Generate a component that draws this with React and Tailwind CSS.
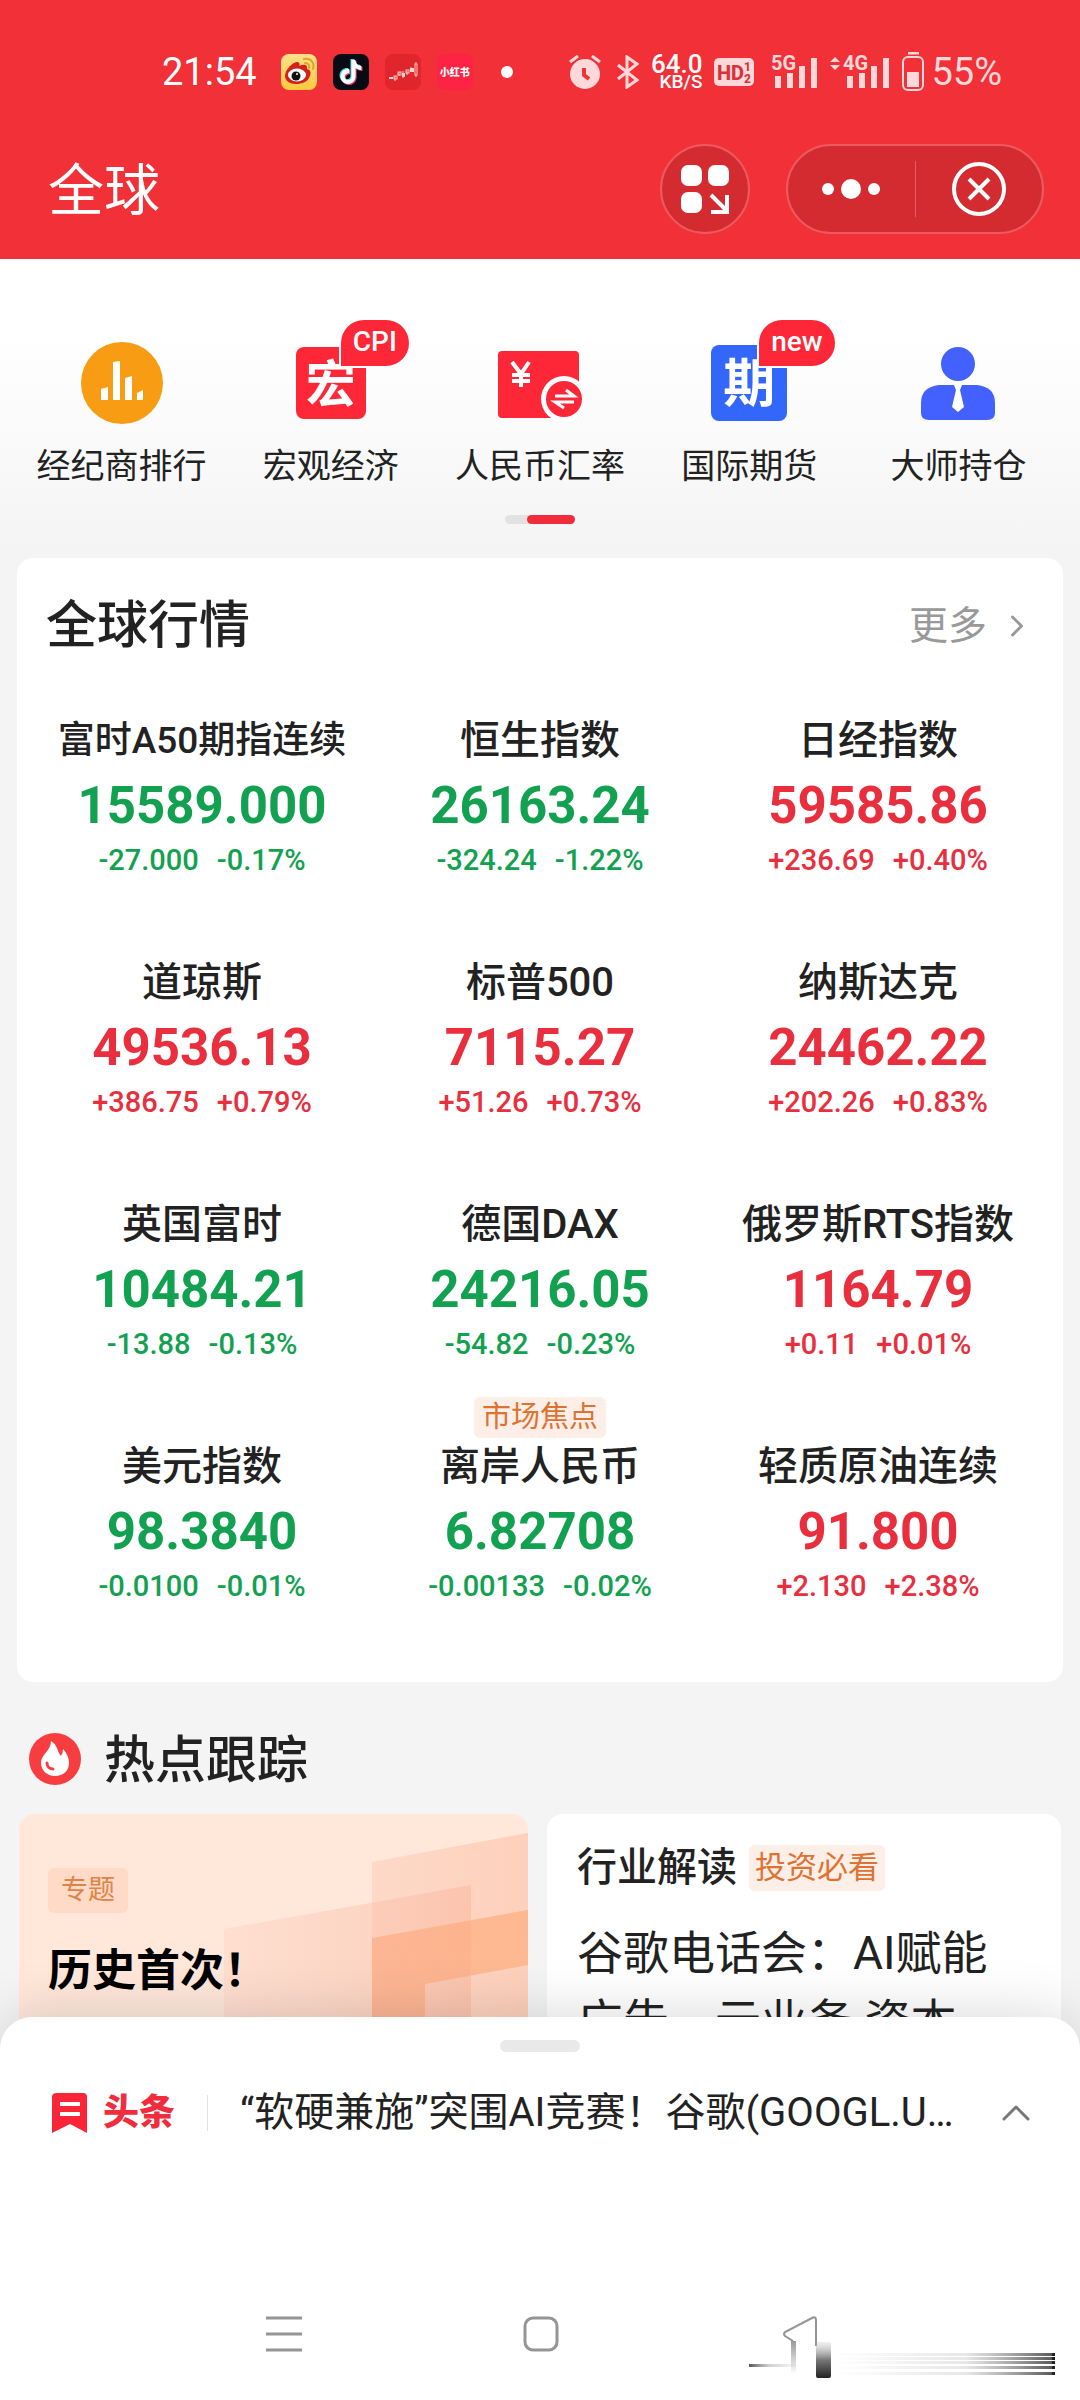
import React from 'react';
import { ChevronRight, ChevronUp } from 'lucide-react';
import { SiTiktok } from 'react-icons/si';

const indices = [
  { name: '富时A50期指连续', value: '15589.000', change: '-27.000', percent: '-0.17%', small: true },
  { name: '恒生指数', value: '26163.24', change: '-324.24', percent: '-1.22%' },
  { name: '日经指数', value: '59585.86', change: '+236.69', percent: '+0.40%' },
  { name: '道琼斯', value: '49536.13', change: '+386.75', percent: '+0.79%' },
  { name: '标普500', value: '7115.27', change: '+51.26', percent: '+0.73%' },
  { name: '纳斯达克', value: '24462.22', change: '+202.26', percent: '+0.83%' },
  { name: '英国富时', value: '10484.21', change: '-13.88', percent: '-0.13%' },
  { name: '德国DAX', value: '24216.05', change: '-54.82', percent: '-0.23%' },
  { name: '俄罗斯RTS指数', value: '1164.79', change: '+0.11', percent: '+0.01%' },
  { name: '美元指数', value: '98.3840', change: '-0.0100', percent: '-0.01%' },
  { name: '离岸人民币', value: '6.82708', change: '-0.00133', percent: '-0.02%', tag: '市场焦点' },
  { name: '轻质原油连续', value: '91.800', change: '+2.130', percent: '+2.38%' },
];

const WeiboIcon = () => (
  <svg viewBox="0 0 36 36" className="w-9 h-9">
    <defs>
      <linearGradient id="weibo" x1="0" y1="0" x2="0" y2="1">
        <stop offset="0" stopColor="#fbe08a" />
        <stop offset="1" stopColor="#fbc93f" />
      </linearGradient>
    </defs>
    <rect width="36" height="36" rx="8" fill="url(#weibo)" />
    <path d="M4 22C4 15 13 7 17 8C19 9 19 11 18 12C22 10 27 10 26 15C30 16 30 19 29 22C27 28 21 30 15 30C9 30 4 27 4 22Z" fill="#d0231c" />
    <ellipse cx="16" cy="21" rx="9" ry="6.5" fill="#fff" />
    <circle cx="15" cy="22" r="4.5" fill="#111" />
    <circle cx="16" cy="20" r="1" fill="#fff" />
    <path d="M24 9C27 9 29 11 28 14M23 5C30 4 34 9 32 15" stroke="#dfa32c" strokeWidth="2" fill="none" strokeLinecap="round" />
  </svg>
);

const StockAppIcon = () => (
  <svg viewBox="0 0 36 36" className="w-9 h-9">
    <rect width="36" height="36" rx="8" fill="#e0252c" />
    <g fill="none" stroke="#f9c9bd" strokeWidth="1">
      <path d="M4 24H8M10 22V27M14 18V22M18 17V24M22 17V21M26 13V18M31 8V23" />
      <rect x="9" y="22" width="3" height="3" />
      <rect x="13" y="18" width="3" height="3" />
      <rect x="21" y="16" width="3" height="3" />
      <rect x="30" y="10" width="2" height="11" fill="#e0252c" />
    </g>
    <g fill="#f9d5cb">
      <rect x="4" y="23" width="4" height="2" />
      <rect x="17" y="19" width="3" height="4" />
      <rect x="25" y="14" width="4" height="4" />
    </g>
  </svg>
);

const Signal = ({ label, arrows }) => (
  <svg viewBox="0 -6 64 46" className="w-16 h-[46px] font-[Roboto,sans-serif]" fill="#ffd9da">
    {arrows && <path d="M0 7L5 2L10 7ZM0 10L5 15L10 10Z" />}
    <text x="13" y="15" fontSize="20" fontWeight="700">{label}</text>
    <rect x="17" y="21" width="6" height="12" />
    <rect x="29" y="18" width="6" height="15" />
    <rect x="41" y="11" width="6" height="22" />
    <rect x="53" y="3" width="6" height="30" />
  </svg>
);

const StatusBar = () => (
  <div className="flex items-center justify-between h-[144px] pl-[162px] pr-[78px] text-[#ffd9da]">
    <div className="flex items-center gap-4">
      <span className="text-[38px] leading-10 text-white mr-2">21:54</span>
      <WeiboIcon />
      <span className="relative flex items-center justify-center w-9 h-9 rounded-lg bg-[#080b14]">
        <SiTiktok className="absolute left-[5px] top-[5px] w-6 h-6 text-[#4fe3e0]" />
        <SiTiktok className="absolute left-[7px] top-[7px] w-6 h-6 text-[#f0446a]" />
        <SiTiktok className="absolute left-[6px] top-[6px] w-6 h-6 text-white" />
      </span>
      <StockAppIcon />
      <span className="flex items-center justify-center w-9 h-9 rounded-lg bg-[#fd2342] text-white text-[10px] font-black">小红书</span>
      <span className="w-3 h-3 ml-3 rounded-full bg-white" />
    </div>
    <div className="flex items-center">
      <svg viewBox="0 0 32 34" className="w-8 h-[34px] mr-4" fill="none">
        <circle cx="16" cy="19" r="15" fill="#ffd9da" />
        <path d="M1 7L9 1M31 7L23 1" stroke="#ffd9da" strokeWidth="3" />
        <path d="M15 13V20L20 24" stroke="#f23037" strokeWidth="4" />
      </svg>
      <svg viewBox="0 0 22 34" className="w-[22px] h-[34px] mr-3" fill="none" stroke="#ffd9da" strokeWidth="3">
        <path d="M1 10L20 25L10 32V2L20 9L1 24" />
      </svg>
      <span className="flex flex-col items-end mr-3 text-white">
        <span className="text-[26px] leading-5 font-medium">64.0</span>
        <span className="text-[19px] leading-4 font-medium">KB/S</span>
      </span>
      <svg viewBox="0 0 40 28" className="w-10 h-7 mr-1 font-[Roboto,sans-serif]">
        <rect width="40" height="28" rx="5" fill="#ffd9da" />
        <g fill="#d8323a" fontWeight="800">
          <text x="3" y="22" fontSize="20">HD</text>
          <text x="30" y="13" fontSize="12">1</text>
          <text x="30" y="25" fontSize="12">2</text>
        </g>
      </svg>
      <Signal label="5G" />
      <span className="w-2" />
      <Signal label="4G" arrows />
      <svg viewBox="0 0 22 40" className="w-[22px] h-10 ml-2 mr-[7px]" fill="none" stroke="#ffd9da">
        <path d="M6 1H17" strokeWidth="3" />
        <rect x="1" y="5" width="20" height="33" rx="5" strokeWidth="2" />
        <rect x="5" y="20" width="12" height="15" fill="#ffd9da" stroke="none" />
      </svg>
      <span className="text-[38px] leading-10">55%</span>
    </div>
  </div>
);

const Header = () => (
  <header className="bg-[#f23037] text-white">
    <StatusBar />
    <div className="flex items-center pl-12 pr-9 pb-[25px]">
      <h1 className="flex-1 pt-1 text-[56px] leading-[86px] font-normal">全球</h1>
      <button aria-label="添加" className="flex items-center justify-center w-[90px] h-[90px] rounded-full border-2 border-[#ec5a5f] bg-[#d42b30]">
        <svg viewBox="0 0 50 50" className="w-[50px] h-[50px]" fill="#fff">
          <rect x="1" y="1" width="21" height="21" rx="7" />
          <rect x="28" y="1" width="21" height="21" rx="7" />
          <rect x="1" y="28" width="21" height="21" rx="7" />
          <path d="M31 31L46 46M47 31V48H31" stroke="#fff" strokeWidth="4" fill="none" />
        </svg>
      </button>
      <div className="flex items-center ml-9 w-[258px] h-[90px] rounded-full border-2 border-[#ec5a5f] bg-[#d42b30]">
        <button aria-label="更多操作" className="flex flex-1 items-center justify-center gap-1">
          <span className="w-3 h-3 rounded-full bg-white" />
          <span className="w-5 h-5 mx-[3px] rounded-full bg-white" />
          <span className="w-3 h-3 rounded-full bg-white" />
        </button>
        <span className="w-px h-14 bg-[#ec5a5f]" />
        <button aria-label="关闭" className="flex flex-1 items-center justify-center">
          <svg viewBox="0 0 54 54" className="w-[54px] h-[54px]" fill="none" stroke="#fff" strokeWidth="4">
            <circle cx="27" cy="27" r="25" />
            <path d="M17 17L37 37M37 17L17 37" />
          </svg>
        </button>
      </div>
    </div>
  </header>
);

const BrokerIcon = () => (
  <svg viewBox="0 0 82 82" className="w-[82px] h-[82px]">
    <circle cx="41" cy="41" r="41" fill="#f89c14" />
    <path d="M20 47L27 45V58H20ZM32 20L39 19V58H32ZM44 36L51 34V58H44ZM56 51L62 48V58H56Z" fill="#fff" />
  </svg>
);

const RmbIcon = () => (
  <svg viewBox="0 0 84 82" className="w-[84px] h-[82px]">
    <rect x="0" y="9" width="81" height="67" rx="4" fill="#fd2737" />
    <path d="M14 20L23 32L31 20M23 31V45M14 33H32M14 39H32" stroke="#fff" strokeWidth="4" fill="none" />
    <circle cx="66" cy="57" r="23" fill="#fff" />
    <circle cx="66" cy="57" r="18" fill="#fd2737" />
    <path d="M57 54H76L68 48M76 60H57L66 66" stroke="#fff" strokeWidth="3" fill="none" />
  </svg>
);

const MasterIcon = () => (
  <svg viewBox="0 0 74 82" className="w-[74px] h-[82px]">
    <circle cx="37" cy="22" r="17" fill="#4361ff" />
    <path d="M18 43H56Q74 45 74 61V71Q74 78 66 78H8Q0 78 0 71V61Q0 45 18 43Z" fill="#4361ff" />
    <path d="M33 43H41L39 48L43 65L37 70L31 65L35 48Z" fill="#fff" />
  </svg>
);

const menu = [
  { label: '经纪商排行', icon: <BrokerIcon /> },
  {
    label: '宏观经济',
    badge: 'CPI',
    icon: <span className="flex items-center justify-center w-[70px] h-[72px] rounded-lg bg-[#fd2737] pt-1 text-white text-[50px] leading-none font-bold">宏</span>,
  },
  { label: '人民币汇率', icon: <RmbIcon /> },
  {
    label: '国际期货',
    badge: 'new',
    icon: <span className="flex items-center justify-center w-[76px] h-[76px] rounded-lg bg-[#3366fa] pt-1 text-white text-[52px] leading-none font-bold">期</span>,
  },
  { label: '大师持仓', icon: <MasterIcon /> },
];

const Menu = () => (
  <nav className="px-[17px] pt-[83px] pb-[34px] bg-linear-to-b from-white from-25% to-[#f4f4f4]">
    <div className="grid grid-cols-5">
      {menu.map((item) => (
        <a key={item.label} href="#" className="flex flex-col items-center text-[34px] leading-10 text-[#222] whitespace-nowrap">
          <span className="relative flex items-center justify-center h-[82px]">
            {item.icon}
            {item.badge && (
              <span className="absolute left-[calc(50%+8px)] -top-6 h-[50px] px-3 rounded-full rounded-bl-none border-2 border-white bg-[#fd2737] text-white text-[28px] leading-[43px] font-medium">
                {item.badge}
              </span>
            )}
          </span>
          <span className="mt-[22px]">{item.label}</span>
        </a>
      ))}
    </div>
    <div className="flex justify-end w-[70px] h-[9px] mx-auto mt-[29px] rounded-full bg-[#e2e2e2]">
      <span className="w-12 rounded-full bg-[#f12d3c]" />
    </div>
  </nav>
);

const IndexCell = ({ item }) => {
  const color = item.change.startsWith('-') ? 'text-[#12a150]' : 'text-[#e92f3e]';
  return (
    <a href="#" className="relative flex flex-col items-center whitespace-nowrap">
      {item.tag && (
        <span className="absolute -top-10 px-2 rounded-md bg-[#fdeee8] text-[29px] leading-[41px] text-[#dd7231]">{item.tag}</span>
      )}
      <span className={`leading-[60px] font-medium text-[#222] ${item.small ? 'text-[37px]' : 'text-[40px]'}`}>{item.name}</span>
      <span className={`text-[51px] leading-[70px] font-bold ${color}`}>{item.value}</span>
      <span className={`flex gap-[18px] text-[29px] leading-[38px] font-medium ${color}`}>
        <span>{item.change}</span>
        <span>{item.percent}</span>
      </span>
    </a>
  );
};

const Markets = () => (
  <section className="mx-[17px] pb-[77px] rounded-2xl bg-white">
    <div className="flex items-center justify-between pt-[33px] pl-[29px] pr-7">
      <h2 className="text-[51px] leading-[70px] font-medium text-[#222]">全球行情</h2>
      <a href="#" className="flex items-center gap-3 text-[39px] leading-[60px] text-[#999]">
        更多
        <ChevronRight className="w-9 h-9" strokeWidth={2} />
      </a>
    </div>
    <div className="grid grid-cols-3 gap-y-[74px] mt-[50px] px-4">
      {indices.map((item) => (
        <IndexCell key={item.name} item={item} />
      ))}
    </div>
  </section>
);

const HotTopics = () => (
  <section className="px-[19px] pt-10">
    <div className="flex items-center gap-[23px] pl-[10px]">
      <svg viewBox="0 0 52 52" className="w-[52px] h-[52px]">
        <circle cx="26" cy="26" r="26" fill="#f83d41" />
        <path d="M22 8C29 12 28 19 32 23Q34 20 34 16C38 20 40 25 40 30C40 38 34 43 26 43C18 43 12 37 12 30C12 21 22 18 22 8Z" fill="#fff" />
        <path d="M18 30C18 34 21 36 24 36" stroke="#f83d41" strokeWidth="3" fill="none" strokeLinecap="round" />
      </svg>
      <h2 className="pt-1 text-[51px] leading-[70px] font-medium text-[#222]">热点跟踪</h2>
    </div>
    <div className="grid grid-cols-[509fr_514fr] gap-[19px] mt-[18px]">
      <a href="#" className="relative block overflow-hidden rounded-2xl bg-[#ffe7da] px-[29px] pt-[54px] pb-40">
        <svg viewBox="0 0 509 340" className="absolute left-0 top-0 w-full">
          <defs>
            <linearGradient id="stairTop" x1="0" y1="0" x2="1" y2="0">
              <stop offset="0" stopColor="#fdd3c0" stopOpacity="0.7" />
              <stop offset="1" stopColor="#fdd0bb" />
            </linearGradient>
            <linearGradient id="stairLeft" x1="0" y1="0" x2="1" y2="0">
              <stop offset="0" stopColor="#fbc4b0" stopOpacity="0.25" />
              <stop offset="1" stopColor="#fab89f" stopOpacity="0.55" />
            </linearGradient>
            <linearGradient id="stair" x1="0" y1="1" x2="1" y2="0">
              <stop offset="0" stopColor="#fbb594" />
              <stop offset="1" stopColor="#feae84" />
            </linearGradient>
          </defs>
          <path d="M353 48L509 19V340H353Z" fill="url(#stairTop)" />
          <path d="M205 115L452 71V340H205Z" fill="url(#stairLeft)" />
          <path d="M353 124L509 96V151L406 170V340H353Z" fill="url(#stair)" opacity="0.85" />
          <path d="M452 106L509 96V151L452 161Z" fill="#ffc39c" opacity="0.3" />
        </svg>
        <span className="relative inline-block px-[13px] rounded-md bg-[#fedac7] text-[27px] leading-[45px] text-[#e08346]">专题</span>
        <h3 className="relative mt-7 text-[44px] leading-[60px] font-bold text-black">历史首次！</h3>
      </a>
      <a href="#" className="block rounded-2xl bg-white px-[30px] pt-[26px] text-[#222]">
        <div className="flex items-center gap-3">
          <h3 className="text-[40px] leading-[56px] font-medium">行业解读</h3>
          <span className="px-[6px] rounded-md bg-[#fdeee8] text-[31px] leading-[46px] text-[#dd7231]">投资必看</span>
        </div>
        <p className="mt-[23px] text-[46px] leading-[68px]">
          谷歌电话会：AI赋能
          <br />
          广告、云业务 资本
        </p>
      </a>
    </div>
  </section>
);

const stripes = [38, 42, 46, 51, 57];

const BackIcon = () => (
  <svg viewBox="0 0 36 36" className="w-9 h-9 overflow-visible" fill="none">
    <defs>
      <linearGradient id="smear" x1="0" y1="0" x2="0" y2="1">
        <stop offset="0" stopColor="#bbb" stopOpacity="0.2" />
        <stop offset="0.5" stopColor="#777" />
        <stop offset="1" stopColor="#222" />
      </linearGradient>
      <linearGradient id="drip" x1="0" y1="0" x2="0" y2="1">
        <stop offset="0" stopColor="#999" />
        <stop offset="1" stopColor="#999" stopOpacity="0" />
      </linearGradient>
      <linearGradient id="streak" x1="0" y1="0" x2="1" y2="0">
        <stop offset="0" stopColor="#888" stopOpacity="0" />
        <stop offset="0.6" stopColor="#888" stopOpacity="0.2" />
        <stop offset="1" stopColor="#555" />
      </linearGradient>
      <linearGradient id="stub" x1="0" y1="0" x2="1" y2="0">
        <stop offset="0" stopColor="#555" />
        <stop offset="0.4" stopColor="#888" stopOpacity="0.4" />
        <stop offset="1" stopColor="#888" stopOpacity="0" />
      </linearGradient>
    </defs>
    <path d="M12 25L4 20Q2 18 4 16L31 2Q35 0 35 4V30" stroke="#959595" strokeWidth="2" />
    <rect x="10" y="25" width="5" height="33" fill="url(#drip)" />
    <rect x="35" y="26" width="15" height="36" rx="2" fill="url(#smear)" />
    <rect x="-32" y="48" width="50" height="3" fill="url(#stub)" />
    {stripes.map((y) => (
      <g key={y}>
        <rect x="52" y={y - 1} width="221" height="3" fill="url(#streak)" />
        <rect x="271" y={y - 1} width="3" height="3" fill="#222" />
      </g>
    ))}
  </svg>
);

const BottomSheet = () => (
  <footer className="relative z-10 -mt-8 rounded-t-[32px] bg-white shadow-[0_0_60px_rgba(0,0,0,0.16)]">
    <div className="flex justify-center pt-[23px]">
      <span className="w-20 h-3 rounded-full bg-[#e9e9e9]" />
    </div>
    <div className="flex items-center pl-[52px] pr-10 mt-8">
      <svg viewBox="0 0 36 40" className="w-9 h-10 shrink-0">
        <path d="M5 0H31Q35 0 35 4V40L18 31L0 40V4Q0 0 5 0Z" fill="#fa2638" />
        <path d="M8 11H28M8 21H28" stroke="#fff" strokeWidth="4" />
      </svg>
      <strong className="ml-[15px] text-[36px] leading-[58px] font-black text-[#f12c3c] whitespace-nowrap">头条</strong>
      <span className="w-px h-9 ml-8 mr-8 bg-[#e2e2e2]" />
      <a href="#" className="flex-1 min-w-0 truncate text-[40px] leading-[58px] text-[#222]">
        “软硬兼施”突围AI竞赛！谷歌(GOOGL.US)电话会
      </a>
      <button aria-label="展开" className="ml-8">
        <ChevronUp className="w-12 h-12 text-[#777]" strokeWidth={1.5} />
      </button>
    </div>
    <div className="grid grid-cols-3 items-center justify-items-center pl-[155px] pr-[152px] pt-[174px] pb-12">
      <button aria-label="菜单">
        <svg viewBox="0 0 36 36" className="w-9 h-9" stroke="#959595" strokeWidth="3">
          <path d="M0 2H36M0 18H36M0 34H36" />
        </svg>
      </button>
      <button aria-label="主页">
        <svg viewBox="0 0 36 36" className="w-9 h-9" fill="none" stroke="#959595" strokeWidth="3">
          <rect x="2" y="2" width="32" height="32" rx="8" />
        </svg>
      </button>
      <button aria-label="返回">
        <BackIcon />
      </button>
    </div>
  </footer>
);

const App = () => {
  return (
    <div className="flex flex-col h-screen overflow-hidden bg-[#f4f4f4] font-[Roboto,'Noto_Sans_CJK_SC',sans-serif]">
      <Header />
      <main className="flex-1 min-h-0 overflow-hidden">
        <Menu />
        <Markets />
        <HotTopics />
      </main>
      <BottomSheet />
    </div>
  );
};

export default App;
